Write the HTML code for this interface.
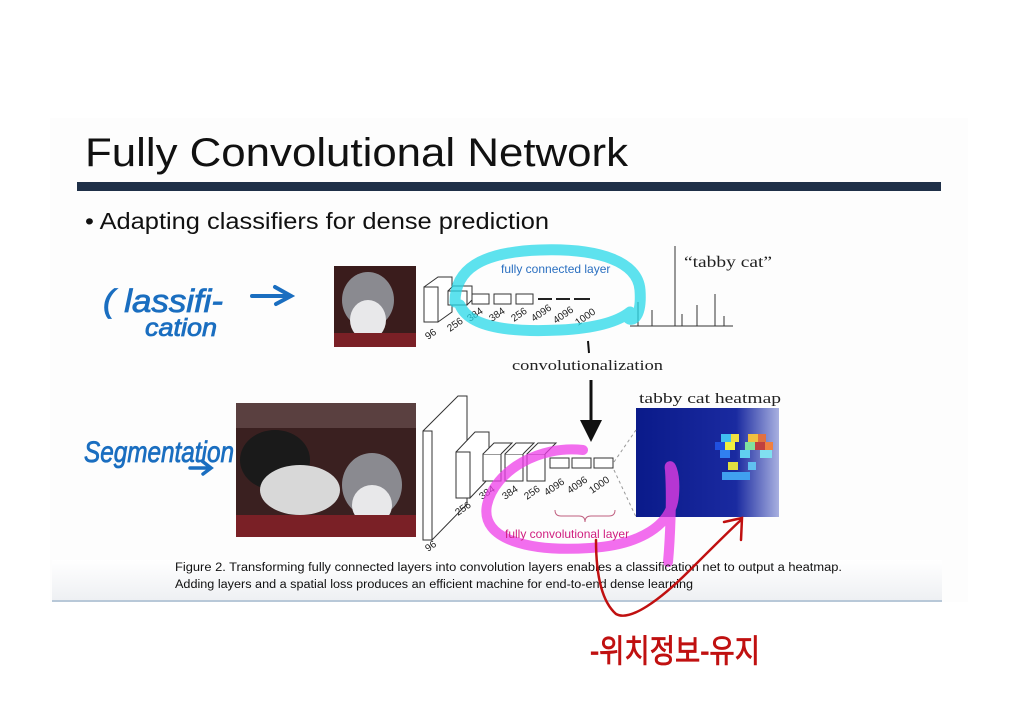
<!DOCTYPE html>
<html><head><meta charset="utf-8"><style>html,body{margin:0;padding:0;background:#fff;width:1020px;height:721px;overflow:hidden}</style></head>
<body>
<svg width="1020" height="721" viewBox="0 0 1020 721" xmlns="http://www.w3.org/2000/svg">
<defs>
<linearGradient id="hm" x1="0" x2="1" y1="0" y2="0"><stop offset="0" stop-color="#0a1a8a"/><stop offset="0.7" stop-color="#1a2aa0"/><stop offset="1" stop-color="#a8b0e0"/></linearGradient>
<linearGradient id="sh" x1="0" x2="0" y1="0" y2="1"><stop offset="0" stop-color="#fff"/><stop offset="1" stop-color="#eef0f3"/></linearGradient>
</defs>
<rect x="50" y="118" width="918" height="484" fill="#fdfdfd"/>
<rect x="52" y="560" width="890" height="40" fill="url(#sh)"/>
<line x1="52" y1="601" x2="942" y2="601" stroke="#b8c8d8" stroke-width="2"/>
<text x="85" y="166" font-family="Liberation Sans, sans-serif" font-size="40" textLength="543" lengthAdjust="spacingAndGlyphs" fill="#111">Fully Convolutional Network</text>
<rect x="77" y="182" width="864" height="9" fill="#1f3048"/>
<text x="85" y="229" font-family="Liberation Sans, sans-serif" font-size="23" textLength="464" lengthAdjust="spacingAndGlyphs" fill="#111">• Adapting classifiers for dense prediction</text>

<!-- top cat -->
<rect x="334" y="266" width="82" height="81" fill="#3a1c1c"/>
<ellipse cx="368" cy="300" rx="26" ry="28" fill="#8a8a90"/>
<ellipse cx="368" cy="320" rx="18" ry="20" fill="#e8e8ea"/>
<rect x="334" y="333" width="82" height="14" fill="#7a2026"/>
<!-- top network -->
<g fill="#fff" stroke="#333" stroke-width="1">
<path d="M424 287 L438 277 L452 277 L452 312 L438 322 Z"/><rect x="424" y="287" width="14" height="35"/>
<path d="M448 291 L453 286 L472 286 L472 300 L467 305 Z"/><rect x="448" y="291" width="19" height="14"/>
<rect x="472" y="294" width="17" height="10"/><rect x="494" y="294" width="17" height="10"/><rect x="516" y="294" width="17" height="10"/>
</g>
<path d="M538 299 h14 m4 0 h14 m4 0 h16" stroke="#222" stroke-width="2"/>
<g font-family="Liberation Sans, sans-serif" font-size="10" fill="#222">
<text x="428" y="340" transform="rotate(-35 428 340)">96</text>
<text x="450" y="332" transform="rotate(-35 450 332)">256</text>
<text x="470" y="322" transform="rotate(-35 470 322)">384</text>
<text x="492" y="322" transform="rotate(-35 492 322)">384</text>
<text x="514" y="322" transform="rotate(-35 514 322)">256</text>
<text x="534" y="322" transform="rotate(-35 534 322)">4096</text>
<text x="556" y="324" transform="rotate(-35 556 324)">4096</text>
<text x="578" y="326" transform="rotate(-35 578 326)">1000</text>
</g>
<!-- bar chart -->
<g stroke="#333" stroke-width="1"><line x1="630" y1="326" x2="733" y2="326"/><line x1="638" y1="326" x2="638" y2="302"/><line x1="652" y1="326" x2="652" y2="310"/><line x1="675" y1="326" x2="675" y2="246"/><line x1="682" y1="326" x2="682" y2="314"/><line x1="697" y1="326" x2="697" y2="305"/><line x1="715" y1="326" x2="715" y2="294"/><line x1="724" y1="326" x2="724" y2="316"/></g>
<text x="684" y="267" font-family="Liberation Serif, serif" font-size="16" fill="#222" textLength="88" lengthAdjust="spacingAndGlyphs">“tabby cat”</text>
<text x="512" y="370" font-family="Liberation Serif, serif" font-size="15" fill="#222" textLength="151" lengthAdjust="spacingAndGlyphs">convolutionalization</text>
<line x1="588" y1="341" x2="589" y2="353" stroke="#111" stroke-width="2"/>
<line x1="591" y1="380" x2="591" y2="430" stroke="#111" stroke-width="3"/>
<path d="M580 420 L591 442 L602 420 Z" fill="#111"/>

<!-- cyan loop -->
<path d="M455 302 C455 270 480 252 540 250 C600 248 638 262 640 290 C642 318 632 322 628 318 M460 305 C470 330 520 332 560 330 C600 328 620 320 630 312" fill="none" stroke="#27d8e8" stroke-opacity="0.75" stroke-width="11" stroke-linecap="round"/>
<text x="501" y="273" font-family="Liberation Sans, sans-serif" font-size="12" fill="#2a6fc0">fully connected layer</text>

<!-- bottom image -->
<rect x="236" y="403" width="180" height="134" fill="#3a2020"/>
<rect x="236" y="403" width="180" height="25" fill="#5a4040"/>
<ellipse cx="275" cy="460" rx="35" ry="30" fill="#1a1a1a"/>
<ellipse cx="300" cy="490" rx="40" ry="25" fill="#d8d8d8"/>
<ellipse cx="372" cy="485" rx="30" ry="32" fill="#8a8a90"/>
<ellipse cx="372" cy="505" rx="20" ry="20" fill="#e8e8ea"/>
<rect x="236" y="515" width="180" height="22" fill="#7a2026"/>
<!-- bottom network -->
<g fill="#fff" stroke="#333" stroke-width="1">
<path d="M423 431 L458 396 L467 396 L467 504 L432 540 Z"/><rect x="423" y="431" width="9" height="109"/>
<path d="M456 452 L475 432 L489 432 L489 478 L470 498 Z"/><rect x="456" y="452" width="14" height="46"/>
<rect x="483" y="454" width="18" height="27"/><path d="M483 454 L494 443 L512 443 L501 454"/>
<rect x="505" y="454" width="18" height="27"/><path d="M505 454 L516 443 L534 443 L523 454"/>
<rect x="527" y="454" width="18" height="27"/><path d="M527 454 L538 443 L556 443 L545 454"/>
<rect x="550" y="458" width="19" height="10"/><rect x="572" y="458" width="19" height="10"/><rect x="594" y="458" width="19" height="10"/>
</g>
<g font-family="Liberation Sans, sans-serif" font-size="10" fill="#222">
<text x="428" y="552" transform="rotate(-35 428 552)">96</text>
<text x="458" y="516" transform="rotate(-35 458 516)">256</text>
<text x="482" y="500" transform="rotate(-35 482 500)">384</text>
<text x="505" y="500" transform="rotate(-35 505 500)">384</text>
<text x="527" y="500" transform="rotate(-35 527 500)">256</text>
<text x="547" y="496" transform="rotate(-35 547 496)">4096</text>
<text x="570" y="494" transform="rotate(-35 570 494)">4096</text>
<text x="592" y="494" transform="rotate(-35 592 494)">1000</text>
</g>
<!-- heatmap -->
<text x="639" y="403" font-family="Liberation Serif, serif" font-size="15" fill="#222" textLength="142" lengthAdjust="spacingAndGlyphs">tabby cat heatmap</text>
<rect x="636" y="408" width="143" height="109" fill="url(#hm)"/>
<g>
<rect x="721" y="434" width="10" height="8" fill="#40c0f0"/><rect x="731" y="434" width="8" height="8" fill="#f0e040"/><rect x="748" y="434" width="10" height="8" fill="#f0c040"/><rect x="758" y="434" width="8" height="8" fill="#e07040"/>
<rect x="715" y="442" width="10" height="8" fill="#2050e0"/><rect x="725" y="442" width="10" height="8" fill="#f0f040"/><rect x="745" y="442" width="10" height="8" fill="#80e0a0"/><rect x="755" y="442" width="10" height="8" fill="#c04040"/><rect x="765" y="442" width="8" height="8" fill="#f08040"/>
<rect x="720" y="450" width="10" height="8" fill="#3080f0"/><rect x="740" y="450" width="10" height="8" fill="#60d0f0"/><rect x="760" y="450" width="12" height="8" fill="#80e0f0"/>
<rect x="728" y="462" width="10" height="8" fill="#e0e040"/><rect x="748" y="462" width="8" height="8" fill="#60c0f0"/>
<rect x="722" y="472" width="28" height="8" fill="#40a0f0"/>
</g>
<g stroke="#999" stroke-width="1" stroke-dasharray="3 3"><line x1="614" y1="462" x2="636" y2="430"/><line x1="614" y1="470" x2="636" y2="517"/></g>

<!-- magenta loop -->
<path d="M583 450 C540 445 495 470 487 505 C480 540 530 552 590 548 C640 545 672 525 674 495 C676 470 668 460 670 470 C672 500 670 540 668 562" fill="none" stroke="#ee3ee8" stroke-opacity="0.75" stroke-width="10" stroke-linecap="round"/>
<path d="M555 510 q0 6 6 6 h18 q6 0 6 6 q0 -6 6 -6 h18 q6 0 6 -6" fill="none" stroke="#c06080" stroke-width="1"/>
<text x="505" y="538" font-family="Liberation Sans, sans-serif" font-size="12" fill="#d02080">fully convolutional layer</text>

<!-- caption -->
<g font-family="Liberation Sans, sans-serif" font-size="11.5" fill="#111">
<text x="175" y="571" textLength="667" lengthAdjust="spacingAndGlyphs">Figure 2. Transforming fully connected layers into convolution layers enables a classification net to output a heatmap.</text>
<text x="175" y="588" textLength="518" lengthAdjust="spacingAndGlyphs">Adding layers and a spatial loss produces an efficient machine for end-to-end dense learning</text>
</g>

<!-- red arrow -->
<path d="M596 540 C596 570 600 600 616 614 C630 622 660 600 690 570 C712 548 730 530 741 520 M724 522 L742 518 L741 540" fill="none" stroke="#c01010" stroke-width="2.5" stroke-linecap="round"/>
<text x="590" y="662" font-family="Liberation Sans, 'Noto Sans CJK KR', sans-serif" font-size="32" fill="#c01010" stroke="#c01010" stroke-width="0.8" textLength="170" lengthAdjust="spacingAndGlyphs">-위치정보-유지</text>

<!-- blue handwriting -->
<g font-family="Liberation Sans, sans-serif" font-style="italic" fill="#1a6ec0" stroke="#1a6ec0" stroke-width="0.8">
<text x="103" y="312" font-size="32" textLength="120" lengthAdjust="spacingAndGlyphs">( lassifi-</text>
<text x="145" y="336" font-size="25" textLength="72" lengthAdjust="spacingAndGlyphs">cation</text>
<text x="84" y="462" font-size="30" textLength="150" lengthAdjust="spacingAndGlyphs">Segmentation</text>
</g>
<path d="M252 296 H290 M275 287 L291 296 L276 304" fill="none" stroke="#1a6ec0" stroke-width="4" stroke-linecap="round"/>
<path d="M190 468 H210 M202 461 L211 468 L203 474" fill="none" stroke="#1a6ec0" stroke-width="3.5" stroke-linecap="round"/>
</svg>
</body></html>
